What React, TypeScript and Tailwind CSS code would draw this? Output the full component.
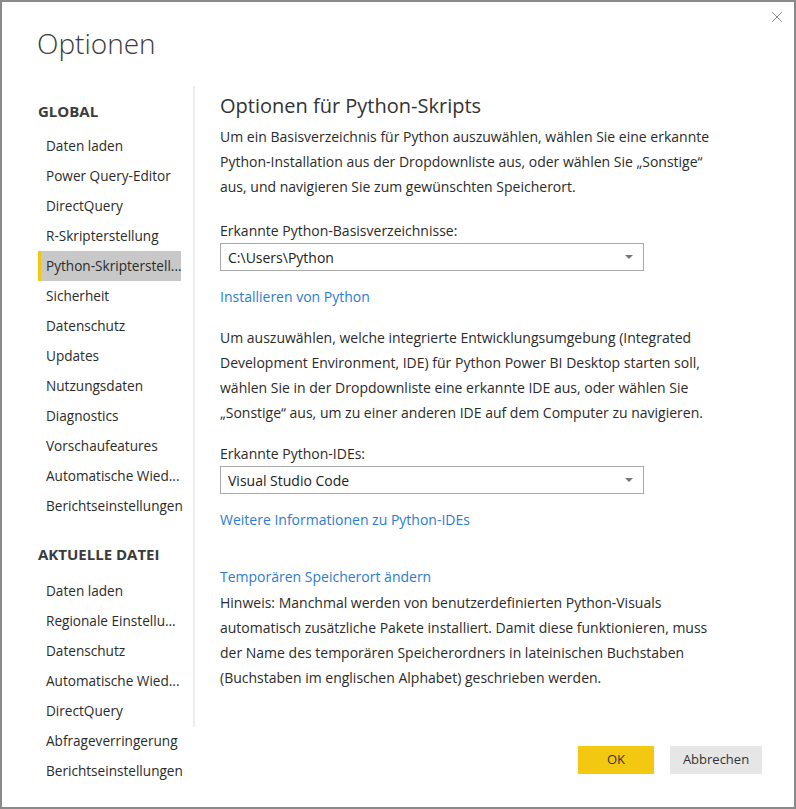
import { X } from 'lucide-react';

const globalItems = [
  'Daten laden',
  'Power Query-Editor',
  'DirectQuery',
  'R-Skripterstellung',
  'Python-Skripterstell...',
  'Sicherheit',
  'Datenschutz',
  'Updates',
  'Nutzungsdaten',
  'Diagnostics',
  'Vorschaufeatures',
  'Automatische Wied...',
  'Berichtseinstellungen',
];

const fileItems = [
  'Daten laden',
  'Regionale Einstellu...',
  'Datenschutz',
  'Automatische Wied...',
  'DirectQuery',
  'Abfrageverringerung',
  'Berichtseinstellungen',
];

function NavItem({ label, active = false }: { label: string; active?: boolean }) {
  return (
    <div
      className={`ml-[36px] w-[143px] h-[30px] flex items-center whitespace-nowrap border-l-[3px] pl-[5px] ${
        active ? 'bg-[#c8c8c8] border-[#f2c811]' : 'border-transparent'
      }`}
    >
      {label}
    </div>
  );
}

function Dropdown({ value }: { value: string }) {
  return (
    <div className="w-[424px] h-[28px] border border-[#a9a9a9] flex items-center justify-between pl-[7px] pr-[10px] text-[14px] text-[#222]">
      <span>{value}</span>
      <svg width="8" height="4" viewBox="0 0 8 4" aria-hidden="true">
        <path d="M0 0h8L4 4z" fill="#777" />
      </svg>
    </div>
  );
}

export default function App() {
  return (
    <div
      className="w-[796px] h-[809px] bg-white border-2 border-[#8a8a8a] flex flex-col relative text-[#333] text-[14px]"
      style={{ fontFamily: '"Open Sans", "Noto Sans", sans-serif' }}
    >
      <button className="absolute right-[8px] top-[6px] text-[#7a7a7a]" aria-label="Schließen">
        <X className="w-[18px] h-[18px]" strokeWidth={1.2} />
      </button>

      <div className="h-[84px] pl-[35px] pt-[22px]">
        <h1 className="text-[28px] font-light leading-[38px] text-[#3b3b3b]">Optionen</h1>
      </div>

      <div className="flex flex-1">
        {/* Sidebar */}
        <div className="w-[191px] pt-[13px] text-[13.6px] text-[#2b2b2b]">
          <div className="ml-[36px] h-[24px] flex items-center font-bold text-[15px] text-[#3b3b3b]">GLOBAL</div>
          <div className="mt-[8px]">
            {globalItems.map((it) => (
              <NavItem key={it} label={it} active={it.startsWith('Python')} />
            ))}
          </div>
          <div className="ml-[36px] mt-[21px] h-[24px] flex items-center font-bold text-[15px] text-[#3b3b3b]">
            AKTUELLE DATEI
          </div>
          <div className="mt-[10px]">
            {fileItems.map((it, i) => (
              <NavItem key={i} label={it} />
            ))}
          </div>
        </div>

        {/* Content */}
        <div className="flex-1 flex flex-col">
          <div className="h-[641px] border-l-2 border-[#ececec] pl-[25px] pt-[7px] leading-[25px] text-[#2b2b2b]">
            <h2 className="text-[20px] leading-[26px] text-[#333]">Optionen für Python-Skripts</h2>
            <p className="mt-[5px]">
              Um ein Basisverzeichnis für Python auszuwählen, wählen Sie eine erkannte
              <br />
              Python-Installation aus der Dropdownliste aus, oder wählen Sie „Sonstige“
              <br />
              aus, und navigieren Sie zum gewünschten Speicherort.
            </p>
            <div className="mt-[19px]">Erkannte Python-Basisverzeichnisse:</div>
            <Dropdown value="C:\Users\Python" />
            <div className="mt-[13px] text-[#2b7cd3]">Installieren von Python</div>
            <p className="mt-[16px]">
              Um auszuwählen, welche integrierte Entwicklungsumgebung (Integrated
              <br />
              Development Environment, IDE) für Python Power BI Desktop starten soll,
              <br />
              wählen Sie in der Dropdownliste eine erkannte IDE aus, oder wählen Sie
              <br />
              „Sonstige“ aus, um zu einer anderen IDE auf dem Computer zu navigieren.
            </p>
            <div className="mt-[16px]">Erkannte Python-IDEs:</div>
            <Dropdown value="Visual Studio Code" />
            <div className="mt-[13px] text-[#2b7cd3]">Weitere Informationen zu Python-IDEs</div>
            <div className="mt-[32px] text-[#2b7cd3]">Temporären Speicherort ändern</div>
            <p className="mt-[1px]">
              Hinweis: Manchmal werden von benutzerdefinierten Python-Visuals
              <br />
              automatisch zusätzliche Pakete installiert. Damit diese funktionieren, muss
              <br />
              der Name des temporären Speicherordners in lateinischen Buchstaben
              <br />
              (Buchstaben im englischen Alphabet) geschrieben werden.
            </p>
          </div>

          <div className="flex justify-end gap-[16px] pr-[32px] pt-[19px]">
            <button className="w-[76px] h-[28px] bg-[#f2c811] text-[13px] text-[#333]">OK</button>
            <button className="w-[92px] h-[28px] bg-[#e6e6e6] text-[13px] text-[#333]">Abbrechen</button>
          </div>
        </div>
      </div>
    </div>
  );
}
